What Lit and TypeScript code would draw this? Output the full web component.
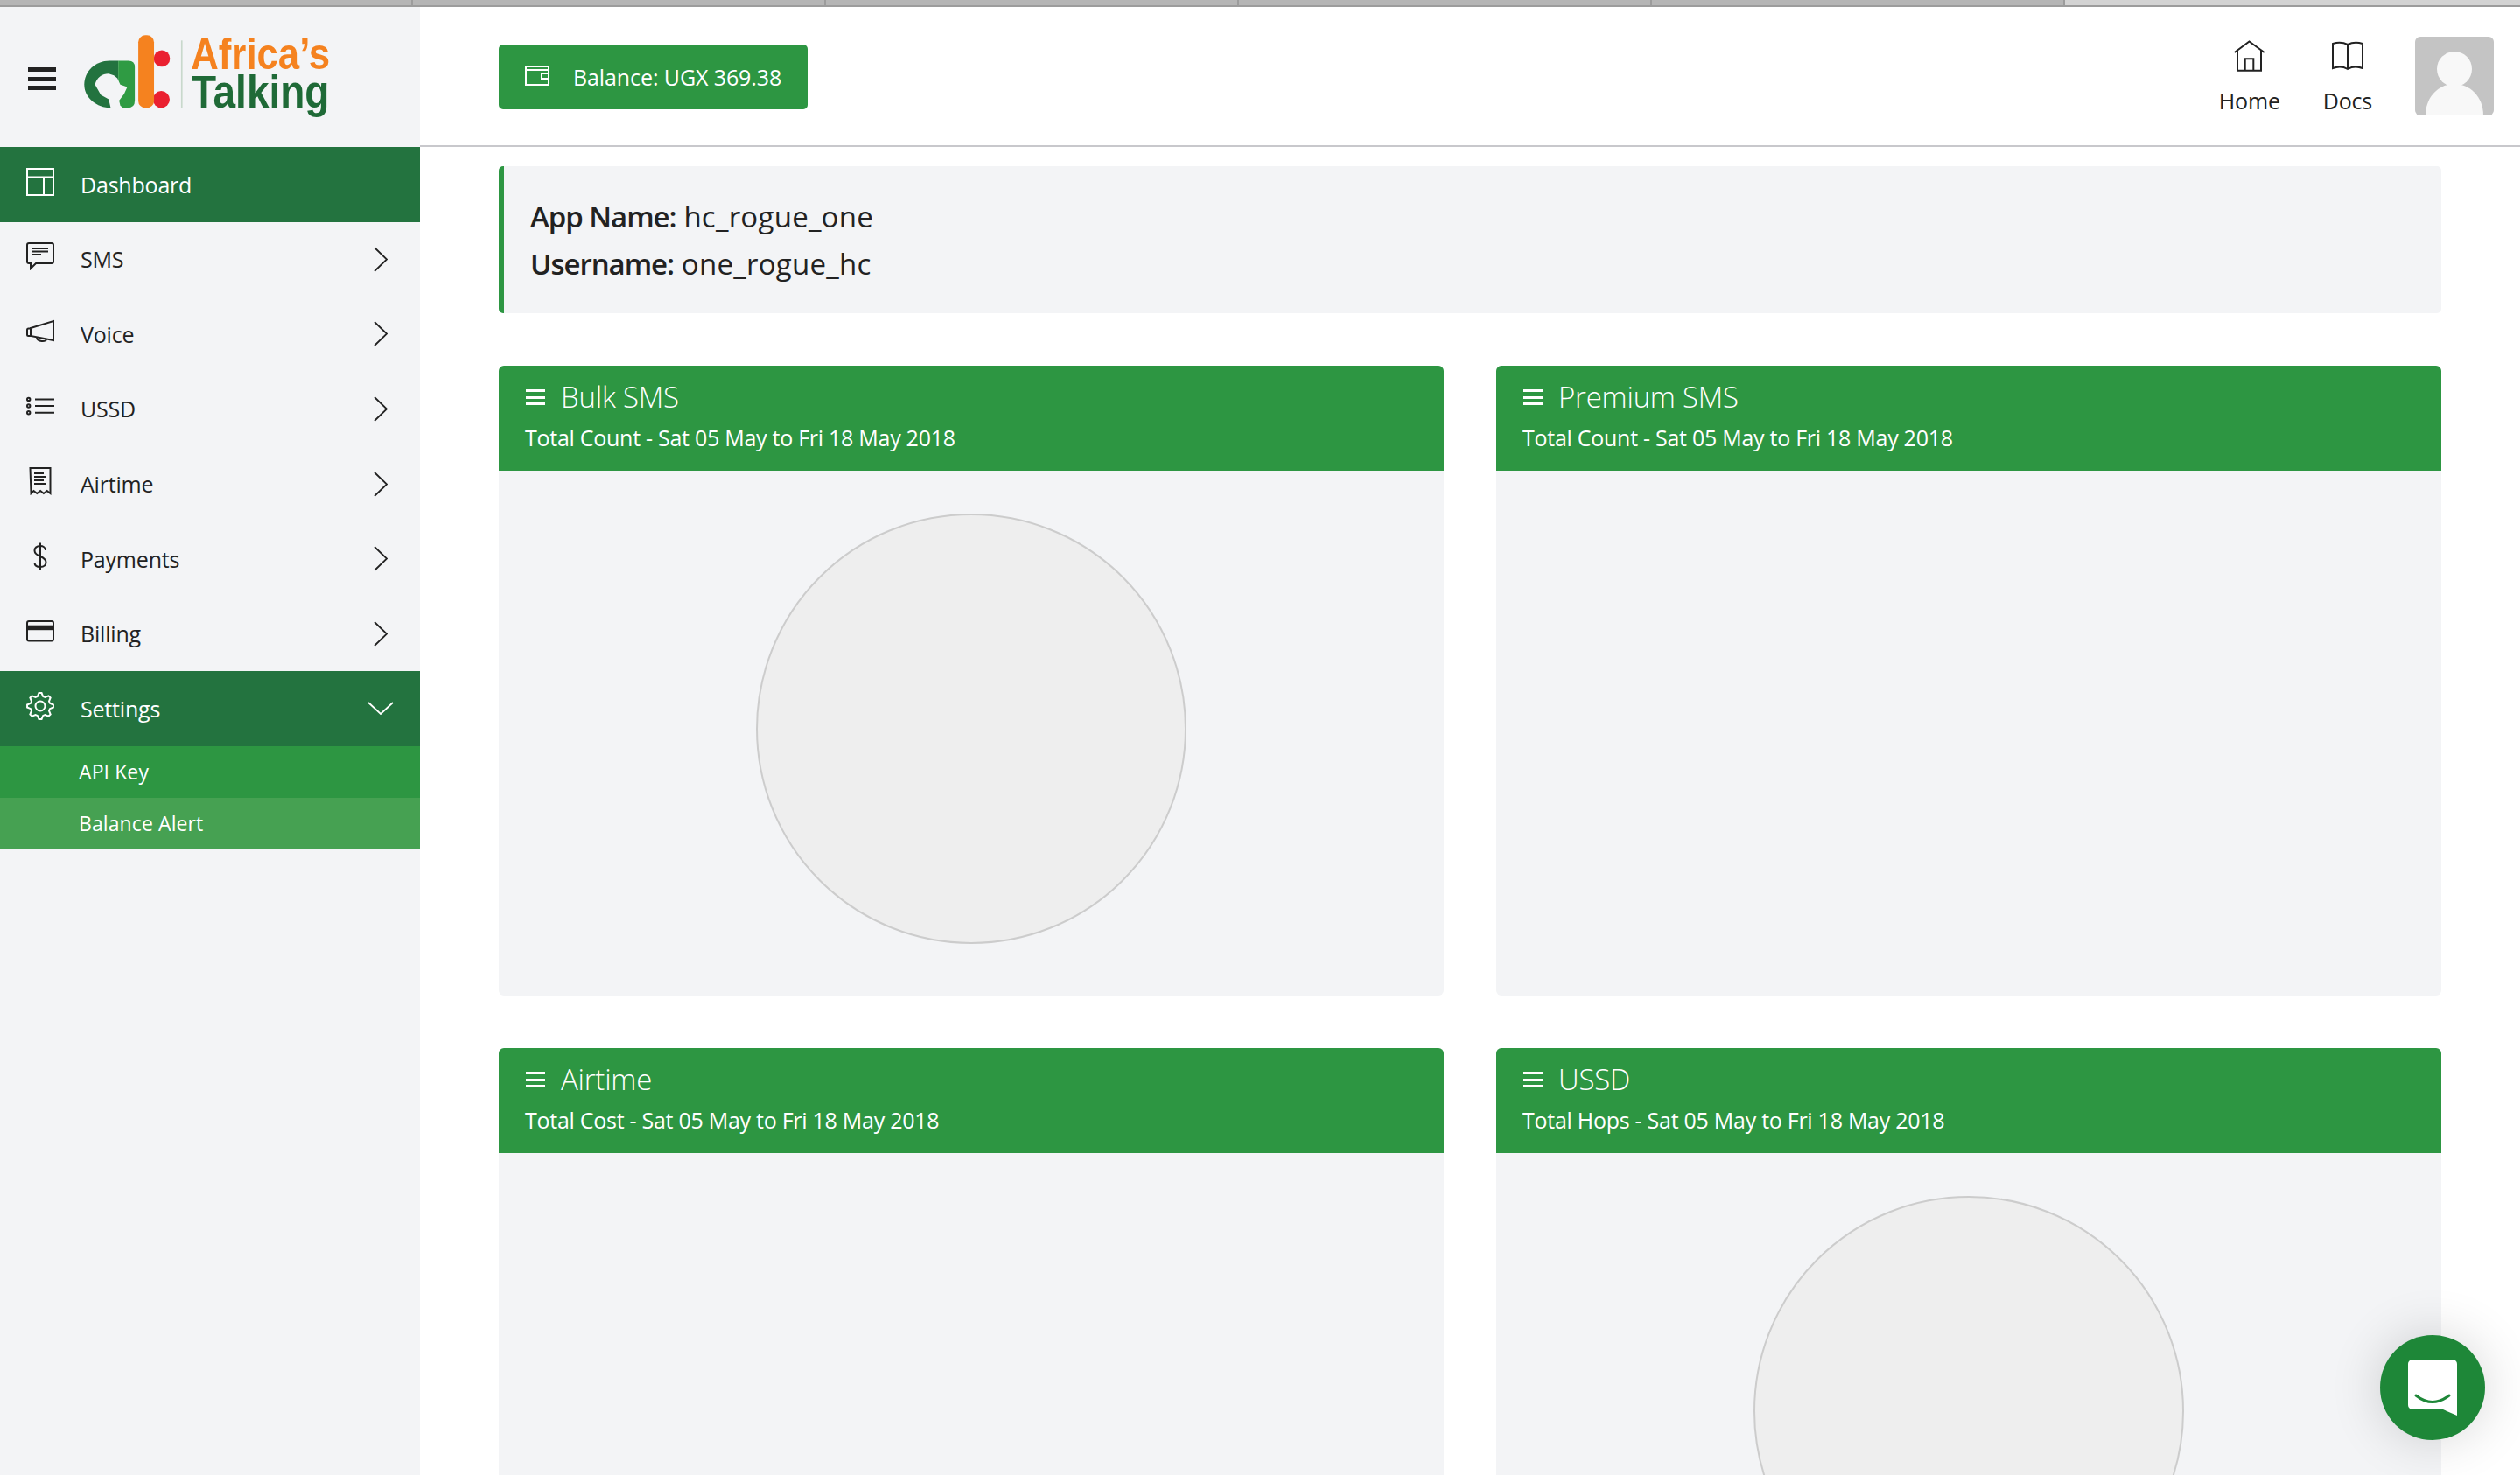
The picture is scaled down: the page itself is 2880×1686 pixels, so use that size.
import { LitElement, html, css, svg } from "lit";
import { customElement } from "lit/decorators.js";

function gearPath(): string {
  const cx = 16, cy = 16, teeth = 8;
  const rOut = 15, rIn = 11.4;
  const pts: string[] = [];
  for (let i = 0; i < teeth; i++) {
    const a = (i / teeth) * Math.PI * 2 - Math.PI / 2;
    const step = (Math.PI * 2) / teeth;
    const seq: [number, number][] = [
      [rIn, a - step * 0.36],
      [rOut, a - step * 0.13],
      [rOut, a + step * 0.13],
      [rIn, a + step * 0.36],
    ];
    for (const [r, t] of seq) {
      pts.push(`${(cx + r * Math.cos(t)).toFixed(2)} ${(cy + r * Math.sin(t)).toFixed(2)}`);
    }
  }
  return "M" + pts.join(" L") + " Z";
}

const icons: Record<string, unknown> = {
  dashboard: svg`<rect x="1" y="1" width="30" height="30"/><path d="M1 10.5H31M20 10.5V31"/>`,
  sms: svg`<path d="M3 1H29a2 2 0 0 1 2 2V22a2 2 0 0 1-2 2H11L5 30V24H3a2 2 0 0 1-2-2V3a2 2 0 0 1 2-2Z"/><path d="M7 7H25M7 10.5H25M7 14H17"/>`,
  voice: svg`<path d="M5 12L31 4V26L5 21Z"/><path d="M5 12.5H2.5Q1 12.5 1 14V19.5Q1 21 2.5 21H5"/><path d="M12 23C13 28 22 28 23 25"/>`,
  ussd: svg`<circle cx="2.7" cy="8.4" r="1.7"/><circle cx="2.7" cy="16" r="1.7"/><circle cx="2.7" cy="23.7" r="1.7"/><path d="M10 8.4H32M10 16H32M10 23.7H32"/>`,
  airtime: svg`<path d="M4.5 1H27.5V30l-3.8-3-3.8 3-3.8-3-3.8 3-3.8-3-3 3Z"/><path d="M9 7H20M9 11H23M9 15H20M9 19H23"/>`,
  payments: svg`<path d="M16 .5V31.5"/><path d="M22 9C22 5.5 19 4 16 4C12 4 9.5 6 9.5 9.5C9.5 13 12.5 14.5 16 16C19.5 17.5 22.5 19 22.5 22.5C22.5 26 20 28 16 28C12 28 9.5 26 9.5 23"/>`,
  billing: svg`<rect x="1" y="5" width="30" height="22.5" rx="2"/><rect x="1" y="9.7" width="30" height="5.5" fill="currentColor" stroke="none"/>`,
  settings: svg`<path d="${gearPath()}"/><circle cx="16" cy="16" r="5.5"/>`,
};

interface NavItem { key: string; label: string; active?: boolean; open?: boolean; chevron: boolean; }

const nav: NavItem[] = [
  { key: "dashboard", label: "Dashboard", active: true, chevron: false },
  { key: "sms", label: "SMS", chevron: true },
  { key: "voice", label: "Voice", chevron: true },
  { key: "ussd", label: "USSD", chevron: true },
  { key: "airtime", label: "Airtime", chevron: true },
  { key: "payments", label: "Payments", chevron: true },
  { key: "billing", label: "Billing", chevron: true },
  { key: "settings", label: "Settings", active: true, open: true, chevron: true },
];

const cards = [
  { title: "Bulk SMS", sub: "Total Count - Sat 05 May to Fri 18 May 2018", pie: true },
  { title: "Premium SMS", sub: "Total Count - Sat 05 May to Fri 18 May 2018", pie: false },
  { title: "Airtime", sub: "Total Cost - Sat 05 May to Fri 18 May 2018", pie: false },
  { title: "USSD", sub: "Total Hops - Sat 05 May to Fri 18 May 2018", pie: true },
];

@customElement("app-root")
export class AppRoot extends LitElement {
  static styles = css`
    :host {
      display: block;
      width: 2880px;
      height: 1686px;
      overflow: hidden;
      position: relative;
      background: #fff;
      font-family: "Open Sans", "Noto Sans", sans-serif;
      color: #222;
    }
    .tabs { display: flex; height: 8px; background: #9c9c9c; }
    .tab { width: 472px; height: 6px; background: #b5b5b5; border-right: 2px solid #9c9c9c; box-sizing: border-box; }
    .tab.on { flex: 1; background: #d3d3d3; border-right: 0; }
    .shell { display: flex; height: 1678px; }
    .side { width: 480px; flex: none; background: #f3f4f6; }
    .brand { height: 160px; display: flex; align-items: center; padding-left: 32px; gap: 32px; }
    .burger { width: 32px; height: 26px; display: flex; flex-direction: column; justify-content: space-between; margin-top: 4px; }
    .burger i { display: block; height: 5px; background: #222; }
    .logo { width: 283px; height: 103px; display: block; filter: blur(.45px); overflow: visible; }
    .row { height: 85.57px; display: flex; align-items: center; padding: 0 37px 0 30px; box-sizing: border-box; font-size: 25px; letter-spacing: -.2px; color: #222; }
    .row.active { background: #23733f; color: #fff; }
    .row .ico { width: 32px; height: 32px; flex: none; margin: 0 30px 6px 0; fill: none; stroke: currentColor; stroke-width: 2; }
    .row span { flex: 1; }
    .chev { fill: none; stroke: currentColor; stroke-width: 1.8; }
    .chev.r { width: 16px; height: 29px; }
    .chev.d { width: 30px; height: 15px; margin-right: -7px; }
    .sub { height: 59px; display: flex; align-items: center; padding-left: 90px; font-size: 23px; letter-spacing: .1px; color: #fff; background: #2d9642; }
    .sub.alt { background: #46a152; }
    .main { flex: 1; min-width: 0; }
    .top { height: 160px; box-sizing: border-box; border-bottom: 2px solid #c8c8cc; display: flex; align-items: center; padding: 0 30px 0 90px; }
    .bal { width: 353px; height: 74px; margin-top: 2px; box-sizing: border-box; background: #2d9642; border-radius: 5px; color: #fff; display: flex; align-items: center; padding-left: 30px; gap: 27px; font-size: 25px; letter-spacing: -.1px; }
    .bal svg { width: 28px; height: 23px; fill: none; stroke: #fff; stroke-width: 2; margin-top: -4px; }
    .links { margin-left: auto; display: flex; align-items: center; gap: 49px; }
    .link { display: flex; flex-direction: column; align-items: center; font-size: 25px; letter-spacing: -.2px; line-height: 34px; gap: 16px; margin-top: 4px; }
    .link svg { width: 36px; height: 36px; fill: none; stroke: #222; stroke-width: 2; }
    .avatar { width: 90px; height: 90px; border-radius: 6px; display: block; }
    .content { padding: 22px 90px 0; }
    .info { height: 168px; box-sizing: border-box; background: #f3f4f6; border-left: 6px solid #2d9642; border-radius: 5px; padding: 31px 30px 0; font-size: 33px; line-height: 54px; letter-spacing: .25px; }
    .info b { font-weight: 600; letter-spacing: -1.05px; }
    .grid { display: grid; grid-template-columns: 1080px 1080px; gap: 60px; margin-top: 60px; }
    .card { background: #f3f4f6; border-radius: 6px; overflow: hidden; }
    .head { height: 120px; box-sizing: border-box; background: #2d9642; color: #fff; padding: 18px 30px 0; }
    .title { display: flex; align-items: center; gap: 18px; font-size: 33px; font-weight: 300; line-height: 36px; letter-spacing: -.25px; }
    .ham { width: 22px; height: 18px; display: flex; flex-direction: column; justify-content: space-between; margin-left: 1px; }
    .ham i { display: block; height: 3px; background: #fff; }
    .subt { font-size: 25px; line-height: 34px; margin-top: 11px; letter-spacing: -.27px; }
    .body { height: 600px; box-sizing: border-box; padding-top: 50px; display: flex; justify-content: center; align-items: flex-start; }
    .pie { width: 492px; height: 492px; margin-top: -1px; box-sizing: border-box; border-radius: 50%; border: 2px solid #ccc; background: #eee; }
    .fab { position: absolute; left: 2720px; top: 1526px; width: 120px; height: 120px; border-radius: 50%; background: #1e8738; box-shadow: 0 0 60px rgba(0,0,0,.16); }
    .fab svg { display: block; width: 120px; height: 120px; }
  `;

  private renderRow(n: NavItem) {
    return html`<div class="row ${n.active ? "active" : ""}">
      <svg class="ico" viewBox="0 0 32 32">${icons[n.key]}</svg>
      <span>${n.label}</span>
      ${n.chevron
        ? n.open
          ? html`<svg class="chev d" viewBox="0 0 30 15"><path d="M1 1L15 14L29 1"/></svg>`
          : html`<svg class="chev r" viewBox="0 0 16 29"><path d="M1 1L15 14.5L1 28"/></svg>`
        : ""}
    </div>`;
  }

  render() {
    return html`
      <div class="tabs">
        ${[0, 1, 2, 3, 4].map(() => html`<div class="tab"></div>`)}
        <div class="tab on"></div>
      </div>
      <div class="shell">
        <aside class="side">
          <div class="brand">
            <div class="burger"><i></i><i></i><i></i></div>
            <svg class="logo" viewBox="288 110 850 310">
              <path fill="#23733f" d="M380 370C330 370 288 335 288 290C288 245 325 208 375 208H405V370Z"/>
              <path fill="#2f9b43" d="M405 208H440Q462 208 462 230V345Q462 370 437 370H405Z"/>
              <path fill="#f3f4f6" d="M325 290C330 265 350 252 372 252L390 258L402 268L412 290L436 298L425 322L408 345L412 362L428 375L380 375L372 340L345 325Z"/>
              <circle cx="555" cy="200" r="28" fill="#ea2030"/>
              <circle cx="553" cy="341" r="29" fill="#ea2030"/>
              <rect x="474" y="120" width="54" height="250" rx="24" fill="#f5821f"/>
              <rect x="621" y="138" width="5" height="232" fill="#c8d8cc"/>
              <text x="655" y="237" font-family="Liberation Sans" font-weight="700" font-size="148" fill="#f5821f" textLength="478" lengthAdjust="spacingAndGlyphs">Africa’s</text>
              <text x="657" y="368" font-family="Liberation Sans" font-weight="700" font-size="158" fill="#1f6a37" textLength="474" lengthAdjust="spacingAndGlyphs">Talking</text>
            </svg>
          </div>
          ${nav.map((n) => this.renderRow(n))}
          <div class="sub">API Key</div>
          <div class="sub alt">Balance Alert</div>
        </aside>
        <main class="main">
          <header class="top">
            <div class="bal">
              <svg viewBox="0 0 28 23"><path d="M1 1H27V22H1Z"/><path d="M1 5H27M27 9H19V15H27"/></svg>
              <span>Balance: UGX 369.38</span>
            </div>
            <nav class="links">
              <div class="link">
                <svg viewBox="0 0 36 36"><path d="M.7 14L17.5 1.5L34.7 14"/><path d="M4 11V34.7H31V11M12.7 34.7V21.3H22.3V34.7"/></svg>
                <span>Home</span>
              </div>
              <div class="link">
                <svg viewBox="0 0 36 36"><path d="M1 4C6 2.5 13 2.5 18 5C23 2.5 30 2.5 35 4V32C30 30 23 30 18 33C13 30 6 30 1 32Z"/><path d="M18 5V33"/></svg>
                <span>Docs</span>
              </div>
              <svg class="avatar" viewBox="0 0 90 90">
                <rect width="90" height="90" fill="#c4c4c4"/>
                <circle cx="45" cy="37" r="20" fill="#f8f8f8"/>
                <path d="M12 90C12 68 28 54 45 54C62 54 78 68 78 90Z" fill="#f8f8f8"/>
              </svg>
            </nav>
          </header>
          <div class="content">
            <section class="info">
              <div><b>App Name:</b> hc_rogue_one</div>
              <div><b>Username:</b> one_rogue_hc</div>
            </section>
            <div class="grid">
              ${cards.map(
                (c) => html`<article class="card">
                  <div class="head">
                    <div class="title"><div class="ham"><i></i><i></i><i></i></div>${c.title}</div>
                    <div class="subt">${c.sub}</div>
                  </div>
                  <div class="body">${c.pie ? html`<div class="pie"></div>` : ""}</div>
                </article>`
              )}
            </div>
          </div>
        </main>
      </div>
      <div class="fab">
        <svg viewBox="0 0 120 120">
          <path fill="#fff" d="M37 28H83a5 5 0 0 1 5 5V92L72 85H37a5 5 0 0 1-5-5V33a5 5 0 0 1 5-5Z"/>
          <path fill="none" stroke="#1e8738" stroke-width="3" stroke-linecap="round" d="M41 69Q60 84 79 69"/>
        </svg>
      </div>
    `;
  }
}
